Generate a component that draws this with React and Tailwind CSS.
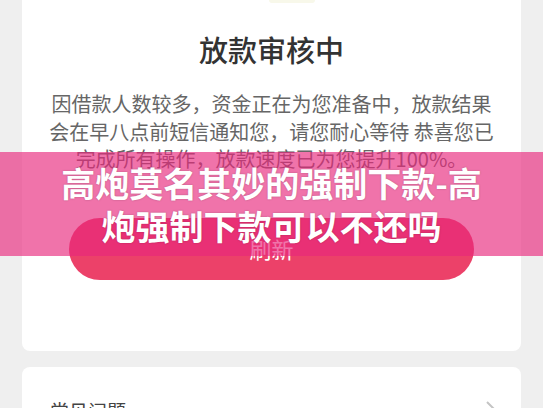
import React from "react";

const cjk = { fontFamily: '"Noto Sans CJK SC", "Noto Sans", sans-serif' };

// status card: title, notice text and refresh button
const StatusCard = () => {
  return (
    <div className="mx-[22px] bg-white rounded-b-[8px] flex flex-col items-center pb-[71px]">
      {/* bottom edge of the illustration above the title */}
      <div className="h-[3px] w-full flex justify-center">
        <div className="w-[46px] h-[3px] rounded-b-full bg-[#f8f8ea] ml-[40px]"></div>
      </div>
      <h1 className="mt-[27px] text-[29px] leading-[38px] font-medium text-[#333333]">
        放款审核中
      </h1>
      <p className="mt-[22px] text-[20px] leading-[27.5px] text-[#666666] text-center">
        因借款人数较多，资金正在为您准备中，放款结果
        <br />
        会在早八点前短信通知您，请您耐心等待 恭喜您已
        <br />
        完成所有操作，放款速度已为您提升100%。
      </p>
      <button className="mt-[45px] w-[405px] h-[62px] rounded-full bg-[#ec4169] text-white text-[22px]">
        刷新
      </button>
    </div>
  );
};

const FaqRow = () => {
  return (
    <div className="mx-[22px] mt-[16px] bg-white rounded-t-[8px] h-[60px] flex items-start justify-between pl-[28px] pr-[24px] pt-[32px]">
      <span className="text-[19px] leading-[24px] text-[#444444]">常见问题</span>
      <svg width="12" height="20" viewBox="0 0 12 20" className="mt-[1px]">
        <path d="M2 2 L10 10 L2 18" fill="none" stroke="#c4c4c4" strokeWidth="2" />
      </svg>
    </div>
  );
};

export default function App() {
  return (
    <div className="relative w-[543px] h-[408px] overflow-hidden bg-[#efefef]" style={cjk}>
      <StatusCard />
      <FaqRow />

      {/* headline banner laid over the page */}
      <div className="absolute left-0 right-0 top-[152px] h-[104px] bg-[rgba(232,40,125,0.65)] flex items-center justify-center">
        <h2 className="text-[34px] leading-[43px] font-bold text-white text-center [text-shadow:0_0_2px_rgba(0,0,0,0.25)]">
          高炮莫名其妙的强制下款-高
          <br />
          炮强制下款可以不还吗
        </h2>
      </div>
    </div>
  );
}
